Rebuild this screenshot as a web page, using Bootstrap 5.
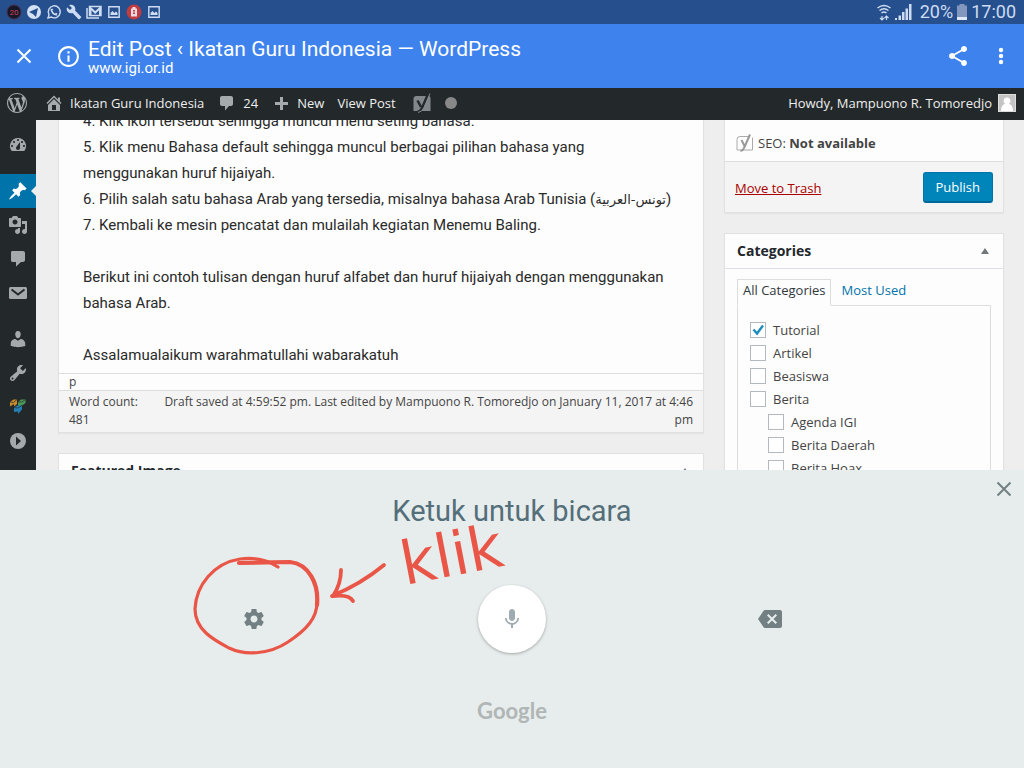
<!DOCTYPE html>
<html lang="id">
<head>
<meta charset="utf-8">
<meta name="viewport" content="width=device-width, initial-scale=1">
<title>Edit Post ‹ Ikatan Guru Indonesia — WordPress</title>
<link href="https://cdn.jsdelivr.net/npm/bootstrap@5.3.0/dist/css/bootstrap.min.css" rel="stylesheet">
<style>
  body { font-family: "Open Sans", "Noto Sans", sans-serif; font-size: 13px; line-height: 18px; color: #444; background: #eee; }
  svg { display: block; flex: none; }
  svg.solid { fill: currentColor; }
  .droid { font-family: Roboto, sans-serif; }
  .bare { border: 0; background: none; padding: 0; color: inherit; }

  .status-strip { background: #264f8e; color: #cddcf2; height: 24px; padding: 0 8px 0 6px; font-size: 18px; }
  .status-strip .apps { gap: 4px; }
  .status-strip .system { gap: 4px; }
  .browser-strip { background: #3e82ee; color: #fff; height: 64px; padding: 0 15px; }
  .browser-strip .page-title { font-size: 21px; line-height: 24px; }
  .browser-strip .page-host { font-size: 15px; line-height: 15px; }
  .browser-strip .site-info { margin: 0 7px 0 23px; }
  .browser-strip .more { margin-left: 23px; }
  .admin-strip { background: #23282a; color: #eee; height: 32px; padding: 0 8px 2px 7px; gap: 13px; }
  .admin-strip a { color: inherit; text-decoration: none; gap: 6px; }
  .admin-strip svg { color: #a5aaad; }
  .admin-strip .seo-state { gap: 14px; margin-left: 4px; }

  .viewport-area { min-height: 0; }
  .side-menu { background: #23282a; width: 36px; padding-top: 8px; color: #a5a9ab; }
  .side-menu a { height: 34px; color: inherit; position: relative; }
  .side-menu a.current { background: #0073aa; color: #fff; }
  .side-menu a.current::after { content: ""; position: absolute; right: 0; top: 12px; border: 5px solid transparent; border-left: 0; border-right-color: #eee; }
  .side-menu .sep { height: 12px; }

  .work { padding: 0 20px 0 22px; gap: 20px; }
  .main-col { min-width: 0; }
  .side-col { width: 280px; flex: none; }
  .boxed { background: #fdfdfd; border: 1px solid #e1e1e1; box-shadow: 0 1px 1px rgba(0,0,0,.04); margin-bottom: 20px; }
  .boxed h2 { font-size: 14px; line-height: 18px; font-weight: 700; margin: 0; padding: 8px 12px; color: #23282d; }
  .boxed .fold { margin-right: 14px; }
  .scrolled { margin-top: -13px; }
  .post-text { font-size: 15px; line-height: 26px; color: #2a2a2a; padding: 0 24px 5px; }
  .post-text p { margin: 0 0 26px; }
  .post-text p:last-child { margin: 0; }
  .post-text bdi { font-family: "DejaVu Sans", sans-serif; font-size: 13px; line-height: 15px; }
  .tag-path { border-top: 1px solid #ddd; border-bottom: 1px solid #ddd; padding: 0 10px; line-height: 16px; font-size: 12px; }
  .post-info { background: #f4f4f4; font-size: 12px; padding: 2px 10px 3px; }
  .post-info .words { width: 80px; }
  .post-info .saved { max-width: 540px; }

  .seo-row { padding: 17px 11px 0; height: 53px; }
  .seo-row span { margin-left: 4px; }
  .actions { background: #f4f4f4; border-top: 1px solid #ddd; padding: 10px 10px 9px; }
  .trash { color: #a00; }
  .btn-publish { --bs-btn-color: #fff; --bs-btn-bg: #0085ba; --bs-btn-border-color: #0073aa; --bs-btn-border-radius: 3px; --bs-btn-font-size: 13px; --bs-btn-padding-x: 12px; --bs-btn-padding-y: 5px; --bs-btn-hover-bg: #008ec2; --bs-btn-hover-color: #fff; line-height: 18px; border-bottom: 2px solid #006799; }
  .cat-body { padding: 10px 12px; }
  .cat-tabs { margin-bottom: -1px; position: relative; }
  .cat-tabs a { padding: 1px 5px 6px; border: 1px solid transparent; text-decoration: none; color: #0073aa; }
  .cat-tabs a.on { border-color: #ddd; border-bottom-color: #fdfdfd; background: #fdfdfd; color: #32373c; }
  .cat-list { border: 1px solid #ddd; padding: 12px; }
  .cat-list label { display: flex; align-items: center; height: 23px; }
  .cat-list .kid { padding-left: 18px; }
  .cat-list input { appearance: none; width: 16px; height: 16px; margin: 0 7px 0 0; border: 1px solid #b4b9be; background: #fff; }
  .cat-list input:checked { background: #fff url("data:image/svg+xml,%3Csvg xmlns='http://www.w3.org/2000/svg' viewBox='0 0 14 14'%3E%3Cpath d='M2.500 6.500l3.500 4L12 2.500' fill='none' stroke='%231e8cbe' stroke-width='2.400'/%3E%3C/svg%3E"); }

  .voice { background: #e7edec; padding: 23px 0 43px; color: #738083; position: relative; }
  .voice h1 { font-size: 29px; line-height: 36px; font-weight: 400; color: #546e7a; margin: 0 0 56px; }
  .voice .close-voice { position: absolute; top: 10px; right: 11px; }
  .voice .controls { padding: 0 125px; }
  .mic { width: 68px; height: 68px; background: #fff; box-shadow: 0 1px 3px rgba(0,0,0,.3); color: #9eabb0; }
  .brand-word { font-family: Lato, sans-serif; font-size: 22px; line-height: 28px; font-weight: 700; color: #b0b6b6; margin-top: 44px; }
  .pen { position: absolute; left: -64px; top: -99px; pointer-events: none; overflow: visible; }
  .pen text { font-family: "DejaVu Sans", sans-serif; font-size: 60px; fill: #e95648; }
</style>
</head>
<body class="vh-100 d-flex flex-column overflow-hidden">

<div class="status-strip droid d-flex align-items-center flex-shrink-0">
  <div class="apps d-flex align-items-center">
    <svg width="16" height="16" viewBox="0 0 16 16"><circle cx="8" cy="8" r="7" fill="#16182a" stroke="#473049"/><text x="8" y="11" font-size="8" text-anchor="middle" fill="#d04358">20</text></svg>
    <svg width="16" height="16" viewBox="0 0 16 16"><circle cx="8" cy="8" r="7" fill="#d5e2f5"/><path d="M3 8l9-4-2 9-3-3z" fill="#264f8e"/></svg>
    <svg width="16" height="16" viewBox="0 0 16 16" fill="none" stroke="#cddcf2" stroke-width="1.400"><path d="M2 14l1-3.400A6 6 0 1 1 5.300 13z"/><path d="M5.500 5c-.5 3 2.500 6 5.500 5.500M5.500 5l1 1.600M11 10.500l-1.500-1" stroke-width="1.800"/></svg>
    <svg width="16" height="16" viewBox="0 0 24 24" fill="#cddcf2"><path d="M22.700 19l-9.100-9.100c.9-2.300.4-5-1.500-6.900-2-2-5-2.400-7.400-1.300L9 6 6 9 1.600 4.700C.4 7.100.9 10.100 2.900 12.100c1.900 1.900 4.600 2.400 6.900 1.500l9.100 9.100c.4.400 1 .4 1.400 0l2.300-2.300c.5-.4.5-1.100.1-1.400z"/></svg>
    <svg width="16" height="16" viewBox="0 0 16 16" fill="none" stroke="#cddcf2" stroke-width="1.500"><path d="M1 4v10h12M3.500 2.500h11.500v9h-11.500z"/><path d="M4.500 11V4l4.700 4.500L14 4v7" stroke-width="2"/></svg>
    <svg width="16" height="16" viewBox="0 0 16 16"><path d="M2.800 2.800h10.400v10.400H2.800z" fill="none" stroke="#cddcf2" stroke-width="1.400"/><path d="M4.500 11V9l2-2 2 2 1.500-1.500 1.500 1.500v2z" fill="#cddcf2"/></svg>
    <svg width="16" height="16" viewBox="0 0 16 16"><circle cx="8" cy="8" r="7.500" fill="#c13c3f"/><path d="M5 4.500h1.500V3h3v1.500H11v8H5z" fill="#eadbe4"/><path d="M7 6h2v1.500H7zM7 8.500h2v1.500H7z" fill="#c13c3f"/></svg>
    <svg width="16" height="16" viewBox="0 0 16 16"><path d="M2.800 2.800h10.400v10.400H2.800z" fill="none" stroke="#cddcf2" stroke-width="1.400"/><path d="M4.500 11V9l2-2 2 2 1.500-1.500 1.500 1.500v2z" fill="#cddcf2"/></svg>
  </div>
  <div class="system d-flex align-items-center ms-auto">
    <svg width="14" height="18" viewBox="0 0 14 18" fill="none" stroke="#cddcf2" stroke-width="1.500"><path d="M.5 5q6.500-5 13 0M2.500 7.500q4.500-3.500 9 0M4.500 10q2.500-2 5 0"/><path d="M5 17v-4M3 15l2 2 2-2M9.500 17v-4M7.500 15l2-2 2 2" stroke-width="1.200"/></svg>
    <svg width="17" height="16" viewBox="0 0 17 16" fill="#cddcf2"><path d="M0 14h2v2H0zM3.500 11.500h2.500V16H3.500zM7 8h2.500v8H7zM10.500 4.500H13V16h-2.500zM14 0h2.500v16H14z"/></svg>
    <span class="ms-1">20%</span>
    <svg width="10" height="16" viewBox="0 0 10 16"><path d="M2.500 0h5v1.500H10V16H0V1.500h2.500z" fill="#8197bd"/><path d="M0 13h10v3H0z" fill="#dfe9f8"/></svg>
    <span>17:00</span>
  </div>
</div>

<header class="browser-strip droid d-flex align-items-center flex-shrink-0">
  <button class="bare" aria-label="Tutup"><svg width="18" height="18" viewBox="0 0 18 18" fill="none" stroke="#fff" stroke-width="2"><path d="M2.500 2.500l13 13m0-13l-13 13"/></svg></button>
  <svg class="solid site-info" width="25" height="25" viewBox="0 0 24 24"><path d="M11 17h2v-6h-2v6zm1-15C6.480 2 2 6.480 2 12s4.480 10 10 10 10-4.480 10-10S17.520 2 12 2zm0 18c-4.410 0-8-3.590-8-8s3.590-8 8-8 8 3.590 8 8-3.590 8-8 8zM11 9h2V7h-2v2z"/></svg>
  <div>
    <div class="page-title">Edit Post ‹ Ikatan Guru Indonesia — WordPress</div>
    <div class="page-host">www.igi.or.id</div>
  </div>
  <button class="bare ms-auto" aria-label="Bagikan"><svg class="solid" width="24" height="24" viewBox="0 0 24 24"><path d="M18 16.080c-.76 0-1.440.3-1.960.77L8.910 12.700c.05-.23.09-.46.09-.7s-.04-.47-.09-.7l7.050-4.110c.54.5 1.250.81 2.040.81 1.660 0 3-1.340 3-3s-1.340-3-3-3-3 1.340-3 3c0 .24.04.47.09.7L8.040 9.810C7.500 9.310 6.790 9 6 9c-1.660 0-3 1.340-3 3s1.340 3 3 3c.79 0 1.500-.31 2.040-.81l7.120 4.160c-.05.21-.08.43-.08.65 0 1.610 1.310 2.920 2.920 2.920s2.920-1.310 2.920-2.920-1.310-2.920-2.920-2.920z"/></svg></button>
  <button class="bare more" aria-label="Menu"><svg class="solid" width="16" height="24" viewBox="4 0 16 24"><circle cx="12" cy="6" r="2.200"/><circle cx="12" cy="12" r="2.200"/><circle cx="12" cy="18" r="2.200"/></svg></button>
</header>

<nav class="admin-strip d-flex align-items-center flex-shrink-0">
  <a href="#" aria-label="WordPress"><svg class="solid" width="20" height="20" viewBox="0 0 20 20"><path d="M20 10c0-5.510-4.490-10-10-10C4.480 0 0 4.490 0 10c0 5.520 4.480 10 10 10 5.510 0 10-4.480 10-10zM7.780 15.370L4.370 6.220c.55-.02 1.170-.08 1.170-.08.5-.06.44-1.130-.06-1.110 0 0-1.450.11-2.370.11-.18 0-.37 0-.58-.01C4.120 2.690 6.870 1.110 10 1.110c2.330 0 4.450.87 6.050 2.340-.68-.11-1.650.39-1.650 1.580 0 .74.45 1.360.9 2.100.35.610.55 1.360.55 2.460 0 1.490-1.400 5-1.400 5l-3.030-8.370c.54-.02.82-.17.82-.17.5-.05.44-1.250-.06-1.220 0 0-1.440.12-2.380.12-.87 0-2.330-.12-2.330-.12-.5-.03-.56 1.200-.06 1.220l.92.08 1.260 3.410zM17.410 10c.24-.64.74-1.870.43-4.250.7 1.290 1.050 2.710 1.050 4.250 0 3.290-1.730 6.240-4.400 7.780.97-2.590 1.940-5.200 2.920-7.780zM6.100 18.090C3.120 16.650 1.110 13.530 1.110 10c0-1.300.23-2.480.72-3.590C3.250 10.300 4.670 14.200 6.100 18.090zm4.030-6.630l2.580 6.980c-.86.29-1.760.45-2.710.45-.79 0-1.570-.11-2.290-.33.81-2.380 1.620-4.740 2.420-7.100z"/></svg></a>
  <a href="#" class="d-flex align-items-center ms-1"><svg class="solid" width="20" height="20" viewBox="0 0 20 20"><path fill-rule="evenodd" d="M16 8.500l1.530 1.530-1.060 1.060L10 4.600l-6.470 6.490-1.060-1.060L10 2.500l4 4v-2h2v4zm-6-2.460l6 5.990V18H4v-5.970zM12 17v-5H8v5h4z"/></svg>Ikatan Guru Indonesia</a>
  <a href="#" class="d-flex align-items-center"><svg class="solid" width="20" height="20" viewBox="0 0 20 20"><path d="M5 3h9c1.100 0 2 .9 2 2v6c0 1.100-.9 2-2 2h-2l-4 4.500V13H5c-1.100 0-2-.9-2-2V5c0-1.100.9-2 2-2z"/></svg>24</a>
  <a href="#" class="d-flex align-items-center"><svg class="solid" width="20" height="20" viewBox="0 0 20 20"><path d="M17 9v3h-5v5H9v-5H4V9h5V4h3v5z"/></svg>New</a>
  <a href="#">View Post</a>
  <a href="#" class="seo-state d-flex align-items-center" aria-label="SEO">
    <svg width="18" height="20" viewBox="0 0 18 20"><path d="M3.500 3H15.500a2 2 0 0 1 2 2V18H.500V6a3 3 0 0 1 3-3z" fill="#82878c"/><path d="M4.500 7.500l3.500 6.500M15.500 0L9.500 14q-2 5-5 4.500" fill="none" stroke="#23282a" stroke-width="2.500"/><path d="M17 .5L11 14.500q-2 4.500-6 5" fill="none" stroke="#82878c" stroke-width="1"/></svg>
    <svg width="12" height="12" viewBox="0 0 12 12"><circle cx="6" cy="6" r="6" fill="#888"/></svg>
  </a>
  <a href="#" class="d-flex align-items-center ms-auto">Howdy, Mampuono R. Tomoredjo
    <svg width="18" height="18" viewBox="0 0 18 18"><path d="M0 0h18v18H0z" fill="#ddd"/><path d="M1 1h16v16H1z" fill="#c4c4c4"/><path d="M9 3.500a3.400 3.400 0 0 1 2 6.200q4 1.500 4 7.300H3q0-5.800 4-7.300a3.400 3.400 0 0 1 2-6.200z" fill="#fff"/></svg></a>
</nav>

<div class="viewport-area d-flex overflow-hidden flex-grow-1">
  <nav class="side-menu flex-shrink-0">
    <a href="#" aria-label="Dashboard" class="d-flex align-items-center justify-content-center"><svg class="solid" width="20" height="20" viewBox="0 0 20 20"><path fill-rule="evenodd" d="M3.760 16h12.480A7.998 7.998 0 0 0 10 3a7.998 7.998 0 0 0-6.240 13zM10 4c.55 0 1 .45 1 1s-.45 1-1 1-1-.45-1-1 .45-1 1-1zM6 6c.55 0 1 .45 1 1s-.45 1-1 1-1-.45-1-1 .45-1 1-1zm8 0c.55 0 1 .45 1 1s-.45 1-1 1-1-.45-1-1 .45-1 1-1zm-5.370 5.550L12 7v6c0 1.100-.9 2-2 2s-2-.9-2-2c0-.57.24-1.080.63-1.450zM4 10c.55 0 1 .45 1 1s-.45 1-1 1-1-.45-1-1 .45-1 1-1zm12 0c.55 0 1 .45 1 1s-.45 1-1 1-1-.45-1-1 .45-1 1-1z"/></svg></a>
    <div class="sep"></div>
    <a href="#" aria-label="Posts" class="current d-flex align-items-center justify-content-center"><svg class="solid" width="20" height="20" viewBox="0 0 20 20"><path d="M10.440 3.020l1.820-1.820 6.360 6.350-1.830 1.820c-1.050-.68-2.480-.57-3.410.36l-.75.75c-.92.93-1.040 2.350-.35 3.410l-1.830 1.820-2.410-2.410-2.800 2.790c-.42.42-3.380 2.710-3.800 2.290s1.860-3.390 2.280-3.810l2.790-2.790L4.100 9.360l1.830-1.820c1.050.69 2.480.57 3.400-.36l.75-.75c.93-.92 1.050-2.350.36-3.410z"/></svg></a>
    <a href="#" aria-label="Media" class="d-flex align-items-center justify-content-center"><svg class="solid" width="20" height="20" viewBox="0 0 20 20"><path fill-rule="evenodd" d="M13 11V4c0-.55-.45-1-1-1h-1.670L9 1H5L3.670 3H2c-.55 0-1 .45-1 1v7c0 .55.45 1 1 1h10c.55 0 1-.45 1-1zM7 4.500c1.380 0 2.500 1.120 2.500 2.500S8.380 9.500 7 9.500 4.500 8.380 4.500 7 5.620 4.500 7 4.500zM14 6h5v10.500c0 1.380-1.120 2.500-2.500 2.500S14 17.880 14 16.500s1.120-2.500 2.500-2.500c.17 0 .34.02.5.05V9h-3V6zm-4 8.050V13h2v3.500c0 1.380-1.120 2.500-2.500 2.500S7 17.880 7 16.500 8.120 14 9.500 14c.17 0 .34.02.5.05z"/></svg></a>
    <a href="#" aria-label="Comments" class="d-flex align-items-center justify-content-center"><svg class="solid" width="20" height="20" viewBox="0 0 20 20"><path d="M4 2h11c1 0 2 .9 2 2v7c0 1.100-.9 2-2 2h-2l-5 4.500V13H4.500C3.400 13 3 12.100 3 11V4c0-1.100.4-2 1-2z"/></svg></a>
    <a href="#" aria-label="Mail" class="d-flex align-items-center justify-content-center"><svg width="20" height="20" viewBox="0 0 20 20"><rect x="1" y="4" width="18" height="12" rx="1.500" fill="#a5a9ab"/><path d="M3.500 6.500l6.500 5 6.500-5" fill="none" stroke="#23282a" stroke-width="2"/></svg></a>
    <div class="sep"></div>
    <a href="#" aria-label="Users" class="d-flex align-items-center justify-content-center"><svg class="solid" width="20" height="20" viewBox="0 0 20 20"><path d="M10 9.250c-2.270 0-2.730-3.440-2.730-3.440C7 4.020 7.820 2 9.970 2c2.160 0 2.980 2.020 2.710 3.810 0 0-.41 3.440-2.680 3.440zm0 2.570L12.720 10c2.390 0 4.520 2.330 4.520 4.530v2.490s-3.650 1.130-7.240 1.130c-3.650 0-7.240-1.130-7.240-1.130v-2.490c0-2.250 1.940-4.480 4.470-4.480z"/></svg></a>
    <a href="#" aria-label="Tools" class="d-flex align-items-center justify-content-center"><svg class="solid" width="20" height="20" viewBox="0 0 20 20"><path fill-rule="evenodd" d="M16.680 9.770c-1.340 1.340-3.300 1.670-4.950.99l-5.410 6.520c-.99.99-2.590.99-3.580 0s-.99-2.590 0-3.570l6.520-5.420c-.68-1.650-.35-3.610.99-4.950 1.280-1.280 3.120-1.620 4.720-1.060l-2.890 2.890 2.820 2.820 2.860-2.870c.53 1.580.18 3.390-1.080 4.650zM3.810 16.210c.4.390 1.040.39 1.430 0 .4-.4.4-1.040 0-1.430-.39-.4-1.030-.4-1.430 0-.39.390-.39 1.030 0 1.430z"/></svg></a>
    <a href="#" aria-label="Composer" class="d-flex align-items-center justify-content-center"><svg width="20" height="20" viewBox="0 0 20 20"><path d="M2 5l3.500-2.500H9V7L6 9.500V7L2 9.500z" fill="#c98a2b"/><path d="M10 5l3-2.500h4.500V6L14 8.500 10 9z" fill="#4c9a57"/><path d="M6 10.500L9.500 8.500H14v4L10 17v-2.500L6 15z" fill="#2580b3"/><path d="M2 5l3.500.500L9 2.500M10 5h4l3.500-2.500M6 10.500l4 .5 4-2.500" fill="none" stroke="#23282a" stroke-width=".7"/></svg></a>
    <a href="#" aria-label="Collapse menu" class="d-flex align-items-center justify-content-center"><svg width="20" height="20" viewBox="0 0 20 20"><circle cx="10" cy="10" r="8" fill="#a5a9ab"/><path d="M8 5.500l5 4.500-5 4.500z" fill="#23282a"/></svg></a>
  </nav>

  <main class="work d-flex flex-grow-1 align-items-start">
    <div class="main-col flex-grow-1">
      <section class="boxed scrolled">
        <div class="post-text droid">
          <p>4. Klik ikon tersebut sehingga muncul menu seting bahasa.<br>
          5. Klik menu Bahasa default sehingga muncul berbagai pilihan bahasa yang menggunakan huruf hijaiyah.<br>
          6. Pilih salah satu bahasa Arab yang tersedia, misalnya bahasa Arab Tunisia (<bdi lang="ar">تونس-العربية</bdi>)<br>
          7. Kembali ke mesin pencatat dan mulailah kegiatan Menemu Baling.</p>
          <p>Berikut ini contoh tulisan dengan huruf alfabet dan huruf hijaiyah dengan menggunakan bahasa Arab.</p>
          <p>Assalamualaikum warahmatullahi wabarakatuh</p>
        </div>
        <div class="tag-path">p</div>
        <div class="post-info d-flex justify-content-between">
          <div class="words">Word count: 481</div>
          <div class="saved text-end">Draft saved at 4:59:52 pm. Last edited by Mampuono R. Tomoredjo on January 11, 2017 at 4:46 pm</div>
        </div>
      </section>
      <section class="boxed">
        <div class="d-flex justify-content-between align-items-center"><h2>Featured Image</h2>
        <svg class="fold" width="8" height="6" viewBox="0 0 8 6"><path d="M0 6l4-6 4 6z" fill="#72777c"/></svg></div>
      </section>
    </div>

    <div class="side-col">
      <section class="boxed scrolled">
        <div class="seo-row d-flex align-items-center">
          <svg width="18" height="18" viewBox="0 0 18 18" fill="none" stroke="#aaa"><path d="M12.500 2.500H4a3 3 0 0 0-3 3v10.500h15.500V3.500" stroke-width="1"/><path d="M5.500 6l3 6M14 .5L8.500 13q-1.500 4-4 4" stroke="#999" stroke-width="2"/></svg>
          <span>SEO: <b>Not available</b></span>
        </div>
        <div class="actions d-flex justify-content-between align-items-center">
          <a href="#" class="trash">Move to Trash</a>
          <button type="button" class="btn btn-publish">Publish</button>
        </div>
      </section>
      <section class="boxed">
        <div class="d-flex justify-content-between align-items-center border-bottom"><h2>Categories</h2>
        <svg class="fold" width="8" height="6" viewBox="0 0 8 6"><path d="M0 6l4-6 4 6z" fill="#72777c"/></svg></div>
        <div class="cat-body">
          <div class="cat-tabs d-flex gap-1"><a href="#" class="on">All Categories</a><a href="#">Most Used</a></div>
          <div class="cat-list">
            <label><input type="checkbox" checked>Tutorial</label>
            <label><input type="checkbox">Artikel</label>
            <label><input type="checkbox">Beasiswa</label>
            <label><input type="checkbox">Berita</label>
            <label class="kid"><input type="checkbox">Agenda IGI</label>
            <label class="kid"><input type="checkbox">Berita Daerah</label>
            <label class="kid"><input type="checkbox">Berita Hoax</label>
          </div>
        </div>
      </section>
    </div>
  </main>
</div>

<section class="voice droid text-center flex-shrink-0">
  <button class="bare close-voice" aria-label="Tutup"><svg width="18" height="18" viewBox="0 0 18 18" fill="none" stroke="#738083" stroke-width="2"><path d="M2.500 2.500l13 13m0-13l-13 13"/></svg></button>
  <h1>Ketuk untuk bicara</h1>
  <div class="controls">
    <div class="row g-0 align-items-center">
      <div class="col-4 d-flex justify-content-center">
        <div class="position-relative">
          <button class="bare d-block" aria-label="Setelan"><svg class="solid" width="24" height="24" viewBox="0 0 24 24"><path d="M19.430 12.980c.04-.32.07-.64.07-.98s-.03-.66-.07-.98l2.110-1.650c.19-.15.24-.42.12-.64l-2-3.460c-.12-.22-.39-.3-.61-.22l-2.490 1c-.52-.4-1.080-.73-1.690-.98l-.38-2.650C14.460 2.180 14.250 2 14 2h-4c-.25 0-.46.18-.49.42l-.38 2.650c-.61.25-1.170.59-1.690.98l-2.490-1c-.23-.09-.49 0-.61.22l-2 3.460c-.13.22-.07.49.12.64l2.110 1.650c-.04.32-.07.65-.07.98s.03.66.07.98l-2.110 1.650c-.19.15-.24.42-.12.64l2 3.460c.12.22.39.3.61.22l2.490-1c.52.4 1.080.73 1.690.98l.38 2.650c.03.24.24.42.49.42h4c.25 0 .46-.18.49-.42l.38-2.650c.61-.25 1.170-.59 1.690-.98l2.490 1c.23.09.49 0 .61-.22l2-3.460c.12-.22.07-.49-.12-.64l-2.110-1.650zM12 15.500c-1.930 0-3.500-1.570-3.500-3.500s1.570-3.500 3.500-3.500 3.500 1.570 3.500 3.500-1.570 3.500-3.500 3.500z"/></svg></button>
          <!-- red pen marks over the settings button -->
          <svg class="pen" width="360" height="160" viewBox="178 508 360 160" fill="none" stroke="#e95648" stroke-linecap="round" stroke-linejoin="round">
            <path d="M278 567Q262 556 240 559C214 563 196 585 195 609C195 630 214 640 229 648C246 656 270 654 288 642C306 630 318 618 317 600" stroke-width="3.200"/>
            <path d="M239 563L290 562C309 564 319 584 317 605" stroke-width="4.200"/>
            <path d="M384 565Q361 584 332 596M341 570Q341 584 333 596Q349 594 353 601" stroke-width="3.800"/>
            <text stroke="none" transform="translate(405 585) rotate(-11)">klik</text>
          </svg>
        </div>
      </div>
      <div class="col-4 d-flex justify-content-center">
        <button class="bare mic rounded-circle d-flex align-items-center justify-content-center" aria-label="Bicara"><svg class="solid" width="24" height="24" viewBox="0 0 24 24"><path d="M12 14c1.660 0 2.990-1.340 2.990-3L15 5c0-1.660-1.340-3-3-3S9 3.340 9 5v6c0 1.660 1.340 3 3 3zm5.300-3c0 3-2.540 5.100-5.300 5.100S6.700 14 6.700 11H5c0 3.410 2.720 6.230 6 6.720V21h2v-3.280c3.280-.48 6-3.300 6-6.720h-1.700z"/></svg></button>
      </div>
      <div class="col-4 d-flex justify-content-center">
        <button class="bare" aria-label="Hapus"><svg class="solid" width="24" height="24" viewBox="0 0 24 24"><path d="M22 3H7c-.69 0-1.230.35-1.590.88L0 12l5.410 8.110c.36.53.9.89 1.590.89h15c1.100 0 2-.9 2-2V5c0-1.100-.9-2-2-2zm-3 12.590L17.590 17 14 13.410 10.410 17 9 15.590 12.590 12 9 8.410 10.410 7 14 10.590 17.590 7 19 8.410 15.410 12 19 15.590z"/></svg></button>
      </div>
    </div>
  </div>
  <div class="brand-word">Google</div>
</section>

<script src="https://cdn.jsdelivr.net/npm/bootstrap@5.3.0/dist/js/bootstrap.bundle.min.js"></script>
</body>
</html>
